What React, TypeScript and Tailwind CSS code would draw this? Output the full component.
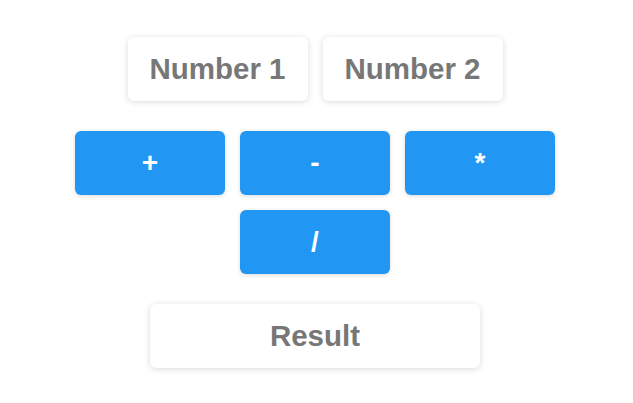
const OPS = ['+', '-', '*', '/'];

function Field({ placeholder, className }: { placeholder: string; className: string }) {
  return (
    <input
      type="text"
      placeholder={placeholder}
      readOnly
      className={`h-16 rounded-md bg-white text-center text-[29.5px] font-bold text-[#777] placeholder:text-[#777] shadow-[0_1px_6px_rgba(0,0,0,0.15)] outline-none ${className}`}
    />
  );
}

export default function App() {
  return (
    <div
      className="flex min-h-[403px] flex-col items-center bg-white pt-[37px] pr-[3px]"
      style={{ fontFamily: '"Liberation Sans", Arial, sans-serif' }}
    >
      <div className="flex gap-[15px]">
        <Field placeholder="Number 1" className="w-[180px]" />
        <Field placeholder="Number 2" className="w-[180px]" />
      </div>

      <div className="mt-[30px] flex w-[480px] flex-wrap justify-center gap-[15px]">
        {OPS.map((op) => (
          <button
            key={op}
            className="h-16 w-[150px] rounded-md bg-[#2196f3] text-[28px] font-bold text-white shadow-[0_1px_4px_rgba(0,0,0,0.15)]"
          >
            {op}
          </button>
        ))}
      </div>

      <div className="mt-[30px]">
        <Field placeholder="Result" className="w-[330px]" />
      </div>
    </div>
  );
}
